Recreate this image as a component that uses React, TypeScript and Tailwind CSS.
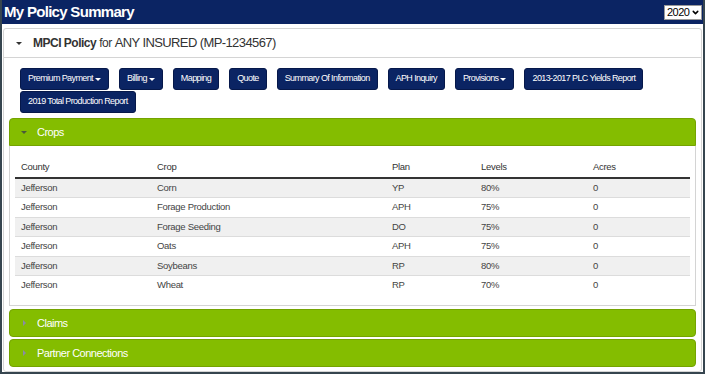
import React from "react";
import { ChevronDown } from "lucide-react";

const actions = [
  { label: "Premium Payment", menu: true },
  { label: "Billing", menu: true },
  { label: "Mapping" },
  { label: "Quote" },
  { label: "Summary Of Information" },
  { label: "APH Inquiry" },
  { label: "Provisions", menu: true },
  { label: "2013-2017 PLC Yields Report" },
  { label: "2019 Total Production Report" },
];

const crops = [
  { county: "Jefferson", crop: "Corn", plan: "YP", levels: "80%", acres: "0" },
  { county: "Jefferson", crop: "Forage Production", plan: "APH", levels: "75%", acres: "0" },
  { county: "Jefferson", crop: "Forage Seeding", plan: "DO", levels: "75%", acres: "0" },
  { county: "Jefferson", crop: "Oats", plan: "APH", levels: "75%", acres: "0" },
  { county: "Jefferson", crop: "Soybeans", plan: "RP", levels: "80%", acres: "0" },
  { county: "Jefferson", crop: "Wheat", plan: "RP", levels: "70%", acres: "0" },
];

function GreenHeader({ title, open }: { title: string; open?: boolean }) {
  return (
    <div
      className={`flex h-[28px] items-center border border-[#74a300] bg-[#84bd00] pl-[11px] ${
        open ? "rounded-t-[4px]" : "rounded-[4px]"
      }`}
    >
      <span className="flex w-[6px] justify-center">
        {open ? (
          <span className="h-0 w-0 border-x-[3px] border-t-[3px] border-x-transparent border-t-[#4a5a3a]" />
        ) : (
          <span className="h-0 w-0 border-y-[3px] border-l-[3px] border-y-transparent border-l-[#8a8aa8]" />
        )}
      </span>
      <span className="ml-[10px] text-[11px] tracking-[-0.5px] text-white">{title}</span>
    </div>
  );
}

export default function App() {
  return (
    <div className="flex h-[374px] w-[705px] flex-col overflow-hidden border-x-2 border-b-2 border-[#36454f] bg-white font-['Liberation_Sans',Arial,sans-serif]">
      {/* title bar */}
      <div className="flex h-[24px] shrink-0 items-center justify-between bg-[#0b2463] pl-[2px] pr-px">
        <span className="text-[15px] font-bold tracking-[-0.7px] text-white">My Policy Summary</span>
        <div className="flex h-[15px] w-[38px] items-center justify-between border border-[#999] bg-white pl-[2px] pr-px text-[11px] leading-none tracking-[-0.5px] text-black">
          <span>2020</span>
          <ChevronDown className="h-[9px] w-[9px]" strokeWidth={4} />
        </div>
      </div>

      <div className="min-h-0 flex-1 px-px pt-[4px]">
        <div className="rounded-[3px] border border-[#d4d4d4]">
          {/* policy header */}
          <div className="flex h-[29px] items-center border-b border-[#d4d4d4] pl-[12px] text-[#333]">
            <span className="h-0 w-0 border-x-[3px] border-t-[3px] border-x-transparent border-t-[#333]" />
            <span className="ml-[11px] text-[12px] font-bold tracking-[-0.5px]">MPCI Policy</span>
            <span className="ml-[3px] text-[12px] tracking-[-0.5px]">for</span>
            <span className="ml-[3px] text-[13px] tracking-[-0.6px]">ANY INSURED (MP-1234567)</span>
          </div>

          <div className="px-[5px] pb-[4px] pt-[10px]">
            {/* action buttons */}
            <div className="flex flex-wrap gap-x-[10px] gap-y-px px-[11px]">
              {actions.map((a) => (
                <button
                  key={a.label}
                  className="flex h-[22px] items-center rounded-[3px] border border-[#06184a] bg-[#0b2463] px-[7px] text-[9px] tracking-[-0.6px] text-white"
                >
                  {a.label}
                  {a.menu && (
                    <span className="ml-[2px] h-0 w-0 border-x-[3px] border-t-[3px] border-x-transparent border-t-white" />
                  )}
                </button>
              ))}
            </div>

            {/* crops */}
            <div className="mt-[5px]">
              <GreenHeader title="Crops" open />
              <div className="border-x border-b border-[#d4d4d4] px-[5px] pb-[10px] pt-[12px]">
                <table className="w-full table-fixed border-collapse text-left text-[9.5px] tracking-[-0.3px]">
                  <thead>
                    <tr className="h-[20px] border-b-2 border-[#333] text-[#333]">
                      <th className="w-[142px] pl-[6px] font-normal">County</th>
                      <th className="w-[235px] font-normal">Crop</th>
                      <th className="w-[89px] font-normal">Plan</th>
                      <th className="w-[112px] font-normal">Levels</th>
                      <th className="font-normal">Acres</th>
                    </tr>
                  </thead>
                  <tbody className="text-[#444]">
                    {crops.map((c, i) => (
                      <tr
                        key={c.crop}
                        className={`h-[19.5px] border-t border-[#dcdcdc] ${i % 2 === 0 ? "bg-[#f0f0f0]" : "bg-white"}`}
                      >
                        <td className="pl-[6px]">{c.county}</td>
                        <td>{c.crop}</td>
                        <td>{c.plan}</td>
                        <td>{c.levels}</td>
                        <td>{c.acres}</td>
                      </tr>
                    ))}
                  </tbody>
                </table>
              </div>
            </div>

            <div className="mt-[3px]">
              <GreenHeader title="Claims" />
            </div>
            <div className="mt-[2px]">
              <GreenHeader title="Partner Connections" />
            </div>
          </div>
        </div>
      </div>
    </div>
  );
}
